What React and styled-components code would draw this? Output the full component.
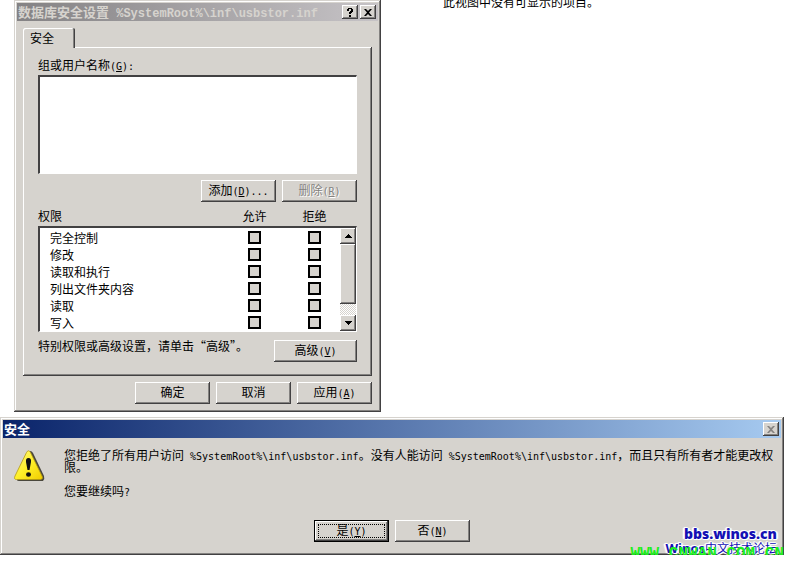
import React from "react";
import styled, { createGlobalStyle, css } from "styled-components";

const face = "#d6d3ce";
const shade = "#848280";
const dark = "#424142";

const GlobalStyle = createGlobalStyle`
  * {
    box-sizing: border-box;
  }
  body {
    margin: 0;
    background: #fff;
    color: #000;
    font-family: "Noto Sans CJK SC", sans-serif;
    font-size: 12px;
    line-height: 16px;
  }
`;

const raised = css`
  box-shadow: inset -1px -1px 0 ${dark}, inset 1px 1px 0 #fff,
    inset -2px -2px 0 ${shade};
`;

const Desktop = styled.main`
  display: flex;
  flex-direction: column;
`;

const TopRow = styled.div`
  display: flex;
  align-items: flex-start;
  padding-left: 14px;
`;

const EmptyView = styled.div`
  display: flex;
  align-items: flex-end;
  height: 10px;
  margin-left: 62px;
  overflow: hidden;
  white-space: nowrap;
`;

const Window = styled.section`
  background: ${face};
  padding: 3px;
  box-shadow: inset -1px -1px 0 ${dark}, inset 1px 1px 0 ${face},
    inset -2px -2px 0 ${shade}, inset 2px 2px 0 #fff;
`;

const PropertiesWindow = styled(Window)`
  flex: 0 1 367px;
  padding-bottom: 8px;
`;

const AlertWindow = styled(Window)`
  position: relative;
  margin: 5px 3px 0 0;
  padding-bottom: 13px;
`;

const TitleBar = styled.header`
  display: flex;
  align-items: center;
  gap: 2px;
  height: 18px;
  padding: 0 2px 0 1px;
  color: ${(props) => (props.$active ? "#fff" : face)};
  background: ${(props) =>
    props.$active
      ? "linear-gradient(90deg, #0a246a, #a6caf0)"
      : "linear-gradient(90deg, #848284, #c6c3c6)"};
`;

const Title = styled.h1`
  flex: 1;
  margin: 0;
  font-size: 13px;
  font-weight: 700;
  line-height: 18px;
  white-space: nowrap;
`;

const Latin = styled.span`
  font-family: "DejaVu Sans Mono", monospace;
  font-size: 10px;
  line-height: 0;
`;

const TitlePath = styled(Latin)`
  font-family: "Liberation Mono", monospace;
  font-size: 12px;
`;

const CaptionButton = styled.button`
  display: flex;
  align-items: center;
  justify-content: center;
  width: 16px;
  height: 14px;
  padding: 0;
  border: 0;
  background: ${face};
  color: ${(props) => (props.disabled ? shade : "#000")};
  ${raised}
`;

const Tab = styled.button`
  position: relative;
  display: block;
  width: 52px;
  height: 20px;
  margin: 7px 0 -1px 6px;
  padding: 0 14px 0 0;
  border: 0;
  border-radius: 2px 2px 0 0;
  background: ${face};
  font: inherit;
  color: inherit;
  box-shadow: inset -1px 0 0 ${dark}, inset 1px 1px 0 #fff,
    inset -2px 0 0 ${shade};
`;

const TabPanel = styled.div`
  margin: 0 6px;
  padding: 10px 15px 14px;
  ${raised}
`;

const Caption = styled.div`
  margin-bottom: 2px;
`;

const ListBox = styled.div`
  display: flex;
  height: ${(props) => props.$height}px;
  overflow: hidden;
  background: #fff;
  border: solid;
  border-width: 2px 1px 1px 2px;
  border-color: ${dark} #fff #fff ${dark};
`;

const ButtonRow = styled.div`
  display: flex;
  justify-content: ${(props) => props.$align || "flex-end"};
  gap: 6px;
  margin: ${(props) => props.$margin || "6px 0"};
`;

const Button = styled.button`
  flex: none;
  width: ${(props) => (props.$wide ? 83 : 75)}px;
  height: 22px;
  padding: 0 0 2px;
  border: 0;
  background: ${face};
  color: #000;
  font: inherit;
  line-height: 18px;
  white-space: nowrap;
  ${raised}

  &:disabled {
    color: ${shade};
    text-shadow: 1px 1px 0 #fff;
  }
`;

const DefaultButton = styled(Button)`
  border: 1px solid #000;
  outline: 1px dotted #000;
  outline-offset: -5px;
`;

const PermissionRow = styled.div`
  display: grid;
  grid-template-columns: 1fr 41px 41px;
  column-gap: 19px;
  align-items: center;
  height: 17px;
  padding: 0 5px 0 10px;
`;

const PermissionHead = styled(PermissionRow)`
  height: 18px;
  padding: 0 22px 0 0;
  align-items: start;

  span + span {
    text-align: center;
  }
`;

const Rows = styled.div`
  flex: 1;
  padding-top: 1px;
`;

const CheckBox = styled.input`
  appearance: none;
  justify-self: center;
  width: 13px;
  height: 13px;
  margin: 0;
  border: 2px solid #000;
  background: ${face};
`;

const ScrollBar = styled.div`
  display: flex;
  flex-direction: column;
  width: 16px;
  background: repeating-conic-gradient(#fff 0 25%, ${face} 0 50%) 0 0 / 2px 2px;
`;

const ScrollButton = styled(CaptionButton)`
  height: 16px;
`;

const Thumb = styled.div`
  height: 60px;
  margin-bottom: auto;
  background: ${face};
  ${raised}
`;

const NoteRow = styled.div`
  display: flex;
  justify-content: space-between;
  align-items: flex-start;
  margin-top: 8px;
  line-height: 12px;
  white-space: nowrap;
`;

const AlertBody = styled.div`
  display: flex;
  align-items: flex-start;
  gap: 18px;
  padding: 11px 5px 0 10px;
`;

const Message = styled.div`
  flex: 1;
  line-height: 12px;

  p {
    margin: 0 0 12px;
  }
  p:last-child {
    margin: 0;
  }
`;

const SiteMark = styled.div`
  position: absolute;
  right: 7px;
  bottom: -1px;
  color: #1410b4;
  font-family: "Open Sans", "Noto Sans CJK SC", sans-serif;
  font-size: 13px;
  font-weight: 700;
  line-height: 14px;
  text-align: right;
  text-shadow: 1px 0 #fff, -1px 0 #fff, 0 1px #fff, 0 -1px #fff, 1px 1px #fff,
    -1px -1px #fff, 2px 0 1px #fff, -2px 0 1px #fff;

  strong {
    font-size: 14px;
  }
  small {
    font-size: 12px;
    font-weight: 400;
  }
`;

const GreenMark = styled.div`
  position: absolute;
  right: 0;
  bottom: -8px;
  color: #1cf01c;
  font-family: "Liberation Mono", monospace;
  font-size: 16px;
  font-weight: 700;
  line-height: 18px;
`;

const Key = ({ letter, after = "" }) => (
  <Latin>
    (<u>{letter}</u>){after}
  </Latin>
);

const CrossIcon = () => (
  <svg width="8" height="7" viewBox="0 0 8 7" aria-hidden="true">
    <path
      d="M0 0h2l2 2 2-2h2L5 3.500 8 7H6L4 5 2 7H0l3-3.500z"
      fill="currentColor"
    />
  </svg>
);

const HelpIcon = () => (
  <svg width="6" height="9" viewBox="0 0 6 9" aria-hidden="true">
    <path
      d="M1 0h4v1h1v3H5v1H4v1H2V4h1V3h1V1H2v2H0V1h1zM2 7h2v2H2z"
      fill="currentColor"
    />
  </svg>
);

const ArrowIcon = ({ down }) => (
  <svg width="7" height="4" viewBox="0 0 7 4" aria-hidden="true">
    <path
      d={down ? "M0 0h7v1H6v1H5v1H4v1H3V3H2V2H1V1H0z" : "M3 0h1v1h1v1h1v1h1v1H0V3h1V2h1V1h1z"}
      fill="#000"
    />
  </svg>
);

const WarningIcon = () => (
  <svg width="33" height="34" viewBox="0 0 33 34" aria-hidden="true">
    <defs>
      <linearGradient id="warn" x1="0" y1="0" x2="1" y2="1">
        <stop offset="0" stopColor="#fff98a" />
        <stop offset="0.5" stopColor="#fff02a" />
        <stop offset="1" stopColor="#f0cc00" />
      </linearGradient>
    </defs>
    <path
      d="M17 2q2 0 3 2l11 23q1 3-1 5H6q-2 0-2-1z"
      fill="#4a473c"
    />
    <path
      d="M13.500 3.500q2-3.500 4 0L29 27q1.500 3-1.500 3.500H3.500Q.5 30.500 2 27z"
      fill="url(#warn)"
      stroke="#b59a10"
      strokeWidth="0.8"
    />
    <path d="M15.500 9q3 0 2.500 4l-1.500 8h-2L13 13q-.5-4 2.500-4z" fill="#111" />
    <ellipse cx="15.500" cy="25.500" rx="2.500" ry="2.300" fill="#111" />
  </svg>
);

const permissions = [
  "完全控制",
  "修改",
  "读取和执行",
  "列出文件夹内容",
  "读取",
  "写入",
];

const PropertiesDialog = () => (
  <PropertiesWindow>
    <TitleBar>
      <Title>
        数据库安全设置<TitlePath> %SystemRoot%\inf\usbstor.inf</TitlePath>
      </Title>
      <CaptionButton aria-label="帮助">
        <HelpIcon />
      </CaptionButton>
      <CaptionButton aria-label="关闭">
        <CrossIcon />
      </CaptionButton>
    </TitleBar>
    <Tab>安全</Tab>
    <TabPanel>
      <Caption id="names">
        组或用户名称
        <Key letter="G" after=":" />
      </Caption>
      <ListBox $height={99} role="listbox" aria-labelledby="names" />
      <ButtonRow>
        <Button>
          添加
          <Key letter="D" after="..." />
        </Button>
        <Button disabled>
          删除
          <Key letter="R" />
        </Button>
      </ButtonRow>
      <PermissionHead>
        <span>权限</span>
        <span>允许</span>
        <span>拒绝</span>
      </PermissionHead>
      <ListBox $height={106}>
        <Rows>
          {permissions.map((name) => (
            <PermissionRow key={name}>
              <span>{name}</span>
              <CheckBox type="checkbox" aria-label={`${name} 允许`} />
              <CheckBox type="checkbox" aria-label={`${name} 拒绝`} />
            </PermissionRow>
          ))}
        </Rows>
        <ScrollBar>
          <ScrollButton aria-label="向上">
            <ArrowIcon />
          </ScrollButton>
          <Thumb />
          <ScrollButton aria-label="向下">
            <ArrowIcon down />
          </ScrollButton>
        </ScrollBar>
      </ListBox>
      <NoteRow>
        <span>特别权限或高级设置，请单击“高级”。</span>
        <Button $wide>
          高级
          <Key letter="V" />
        </Button>
      </NoteRow>
    </TabPanel>
    <ButtonRow $margin="6px 6px 0">
      <Button>确定</Button>
      <Button>取消</Button>
      <Button>
        应用
        <Key letter="A" />
      </Button>
    </ButtonRow>
  </PropertiesWindow>
);

const AlertDialog = () => (
  <AlertWindow>
    <TitleBar $active>
      <Title>安全</Title>
      <CaptionButton disabled aria-label="关闭">
        <CrossIcon />
      </CaptionButton>
    </TitleBar>
    <AlertBody>
      <WarningIcon />
      <Message>
        <p>
          您拒绝了所有用户访问<Latin> %SystemRoot%\inf\usbstor.inf</Latin>
          。没有人能访问<Latin> %SystemRoot%\inf\usbstor.inf</Latin>
          ，而且只有所有者才能更改权限。
        </p>
        <p>
          您要继续吗<Latin>?</Latin>
        </p>
      </Message>
    </AlertBody>
    <ButtonRow $align="center" $margin="23px 0 0">
      <DefaultButton>
        是
        <Key letter="Y" />
      </DefaultButton>
      <Button>
        否
        <Key letter="N" />
      </Button>
    </ButtonRow>
    <SiteMark>
      <strong>bbs.winos.cn</strong>
      <br />
      Winos<small>中文技术论坛</small>
    </SiteMark>
    <GreenMark>WWW.CNWAN.COM.CN</GreenMark>
  </AlertWindow>
);

const App = () => {
  return (
    <>
      <GlobalStyle />
      <Desktop>
        <TopRow>
          <PropertiesDialog />
          <EmptyView>此视图中没有可显示的项目。</EmptyView>
        </TopRow>
        <AlertDialog />
      </Desktop>
    </>
  );
};

export default App;
